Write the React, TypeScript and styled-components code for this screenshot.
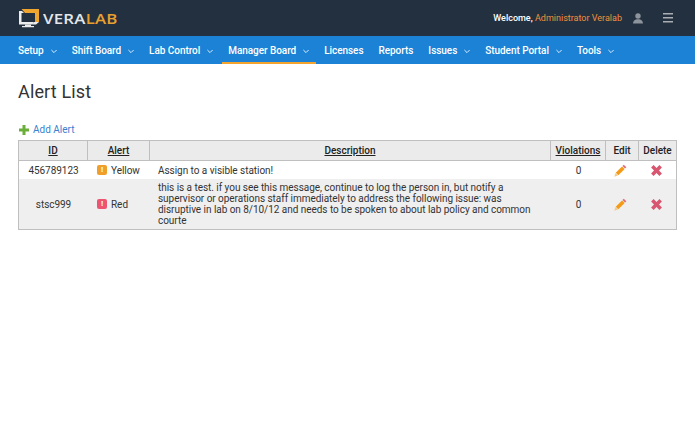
import React from "react";
import styled, { createGlobalStyle } from "styled-components";

const Global = createGlobalStyle`
  html, body { margin: 0; padding: 0; background: #fff; }
  body { font-family: Roboto, "Liberation Sans", sans-serif; font-size: 10px; color: #333; }
`;
const Page = styled.div`width: 695px; height: 434px; overflow: hidden; background: #fff;`;
const TopBar = styled.header`
  height: 36px; background: #22303f; display: flex; align-items: center; justify-content: space-between;
  padding: 0 22px 0 19px;
`;
const Logo = styled.div`display: flex; align-items: center; gap: 4px;`;
const LogoWord = styled.span`
  font: 600 14px/1 "Open Sans", sans-serif; letter-spacing: 0.2px; color: #e4e7ea; margin-top: 1px;
  transform: scaleX(1.2); transform-origin: left center; width: 90px; white-space: nowrap;
`;
const LogoAccent = styled.span`color: #e8a02e;`;
const UserArea = styled.div`display: flex; align-items: center;`;
const Welcome = styled.span`font-size: 9px; font-weight: 500; color: #fff; white-space: nowrap;`;
const UserName = styled.span`color: #f0923e; font-weight: 400;`;
const UserIcon = styled.svg`margin-left: 11px; width: 10px; height: 11px;`;
const MenuIcon = styled.svg`margin-left: 20px; width: 10px; height: 10px;`;
const Nav = styled.nav`height: 28px; background: #1b82d6; display: flex; padding-left: 12px;`;
const NavItem = styled.a<{ $active?: boolean }>`
  display: flex; align-items: center; gap: 7px; padding: 0 7px 0 6px; margin-right: 2px; box-sizing: border-box;
  height: 28px; color: #fff; font-size: 10px; font-weight: 500; letter-spacing: -0.05px; white-space: nowrap;
  border-bottom: 2px solid ${(p) => (p.$active ? "#f4a42c" : "transparent")};
  padding-top: 3px;
`;
const Chevron = styled.svg`width: 6px; height: 5px; margin-top: 2px;`;
const Main = styled.main`padding: 17px 18px 0;`;
const Title = styled.h1`margin: 0; font-size: 18px; font-weight: 400; line-height: 21px; color: #333; letter-spacing: 0.15px;`;
const AddLink = styled.a`
  display: flex; align-items: center; gap: 4px; margin-top: 21px; margin-bottom: 4px; height: 13px; color: #3a7fd0; font-size: 10px;
  padding-left: 1px;
`;
const Table = styled.table`
  width: 659px; box-sizing: border-box; border-collapse: separate; border-spacing: 0; table-layout: fixed;
  border: 1px solid #bfbfbf; font-size: 10px;
`;
const Th = styled.th<{ $w: number; $link?: boolean; $last?: boolean }>`
  box-sizing: border-box; width: ${(p) => p.$w}px; height: 20px; padding: 0; background: #ebebeb;
  border-bottom: 1px solid #bfbfbf; border-right: ${(p) => (p.$last ? "none" : "1px solid #bfbfbf")};
  font-weight: 500; color: #222; text-decoration: ${(p) => (p.$link ? "underline" : "none")};
`;
const Tr = styled.tr<{ $alt?: boolean }>`background: ${(p) => (p.$alt ? "#efefef" : "#fff")};`;
const Td = styled.td<{ $center?: boolean }>`
  padding: 0 8px; line-height: 11px; height: 18px; text-align: ${(p) => (p.$center ? "center" : "left")}; color: #333;
  letter-spacing: -0.04px;
`;
const IconTd = styled(Td)<{ $shift: number }>`padding: 0 ${(p) => p.$shift}px 0 0;`;
const DescTd = styled(Td)`padding: 3px 8px; height: auto;`;
const AlertCell = styled.div`display: flex; align-items: center; gap: 4px; margin-left: 1px;`;
const Badge = styled.span<{ $c: string }>`
  flex: none; width: 10px; height: 10px; border-radius: 2px; background: ${(p) => p.$c}; color: #fff; font-size: 8px; font-weight: 700;
  display: flex; align-items: center; justify-content: center; line-height: 10px;
`;
const Ico = styled.svg`display: block; margin: 0 auto; width: 13px; height: 13px;`;

const Down = () => (
  <Chevron viewBox="0 0 6 5"><path d="M.4 1l2.600 2.600L5.600 1" fill="none" stroke="#dfeeff" strokeWidth="1" /></Chevron>
);
const Pencil = () => (
  <Ico viewBox="0 0 12 12">
    <path d="M9 .6l2.400 2.400-1.200 1.200L7.800 1.800z" fill="#e2697a" />
    <path d="M7.400 2.200l2.400 2.400-5.800 5.800-2.400-2.400z" fill="#f49a16" />
    <path d="M1.300 8.300l2.400 2.400-3.400 1z" fill="#f2c98a" />
  </Ico>
);
const Cross = () => (
  <Ico viewBox="0 0 12 12">
    <path d="M1 3.300L3.300 1 6 3.700 8.700 1 11 3.300 8.300 6 11 8.700 8.700 11 6 8.300 3.300 11 1 8.700 3.700 6z" fill="#d8566f" />
  </Ico>
);
const navItems: [string, boolean, boolean?][] = [
  ["Setup", true], ["Shift Board", true], ["Lab Control", true], ["Manager Board", true, true],
  ["Licenses", false], ["Reports", false], ["Issues", true], ["Student Portal", true], ["Tools", true],
];

export default function App() {
  return (
    <Page>
      <Global />
      <TopBar>
        <Logo>
          <svg width="20" height="19" viewBox="0 0 20 19">
            <path d="M0 2h3l2 2H2.500v9H15l-1.500 2.500H0z" fill="#ececec" />
            <path d="M2.500 0H20v13h-4V4H6z" fill="#f0a52e" />
            <path d="M6 15.500h6V17h3v1.300H3V17h3z" fill="#ececec" />
            <path d="M15 13h5l-3 2.500h-3.500z" fill="#ececec" />
          </svg>
          <LogoWord>VERA<LogoAccent>LAB</LogoAccent></LogoWord>
        </Logo>
        <UserArea>
          <Welcome>Welcome, <UserName>Administrator Veralab</UserName></Welcome>
          <UserIcon viewBox="0 0 10 11">
            <circle cx="5" cy="3" r="2.700" fill="#8d949b" />
            <path d="M0 10.500c0-3 2-4 3.500-4.300h3C8 6.500 10 7.500 10 10.500z" fill="#8d949b" />
          </UserIcon>
          <MenuIcon viewBox="0 0 10 10">
            <path d="M0 0h10v1.600H0zM0 4h10v1.600H0zM0 8h10v1.600H0z" fill="#a9aeb3" />
          </MenuIcon>
        </UserArea>
      </TopBar>
      <Nav>
        {navItems.map(([t, c, a]) => (
          <NavItem key={t} $active={a}>{t}{c && <Down />}</NavItem>
        ))}
      </Nav>
      <Main>
        <Title>Alert List</Title>
        <AddLink>
          <svg width="10" height="10" viewBox="0 0 10 10"><path d="M3.500 0h3v3.500H10v3H6.500V10h-3V6.500H0v-3h3.500z" fill="#6cae3a" /></svg>
          Add Alert
        </AddLink>
        <Table>
          <thead>
            <tr>
              <Th $w={69} $link>ID</Th>
              <Th $w={62} $link>Alert</Th>
              <Th $w={401} $link>Description</Th>
              <Th $w={55} $link>Violations</Th>
              <Th $w={33}>Edit</Th>
              <Th $w={37} $last>Delete</Th>
            </tr>
          </thead>
          <tbody>
            <Tr>
              <Td $center>456789123</Td>
              <Td><AlertCell><Badge $c="#f0a02a">!</Badge>Yellow</AlertCell></Td>
              <DescTd>Assign to a visible station!</DescTd>
              <Td $center>0</Td>
              <IconTd $shift={4}><Pencil /></IconTd>
              <IconTd $shift={2}><Cross /></IconTd>
            </Tr>
            <Tr $alt>
              <Td $center>stsc999</Td>
              <Td><AlertCell><Badge $c="#ee5470">!</Badge>Red</AlertCell></Td>
              <DescTd>this is a test. if you see this message, continue to log the person in, but notify a<br />supervisor or operations staff immediately to address the following issue: was<br />disruptive in lab on 8/10/12 and needs to be spoken to about lab policy and common<br />courte</DescTd>
              <Td $center>0</Td>
              <IconTd $shift={4}><Pencil /></IconTd>
              <IconTd $shift={2}><Cross /></IconTd>
            </Tr>
          </tbody>
        </Table>
      </Main>
    </Page>
  );
}
